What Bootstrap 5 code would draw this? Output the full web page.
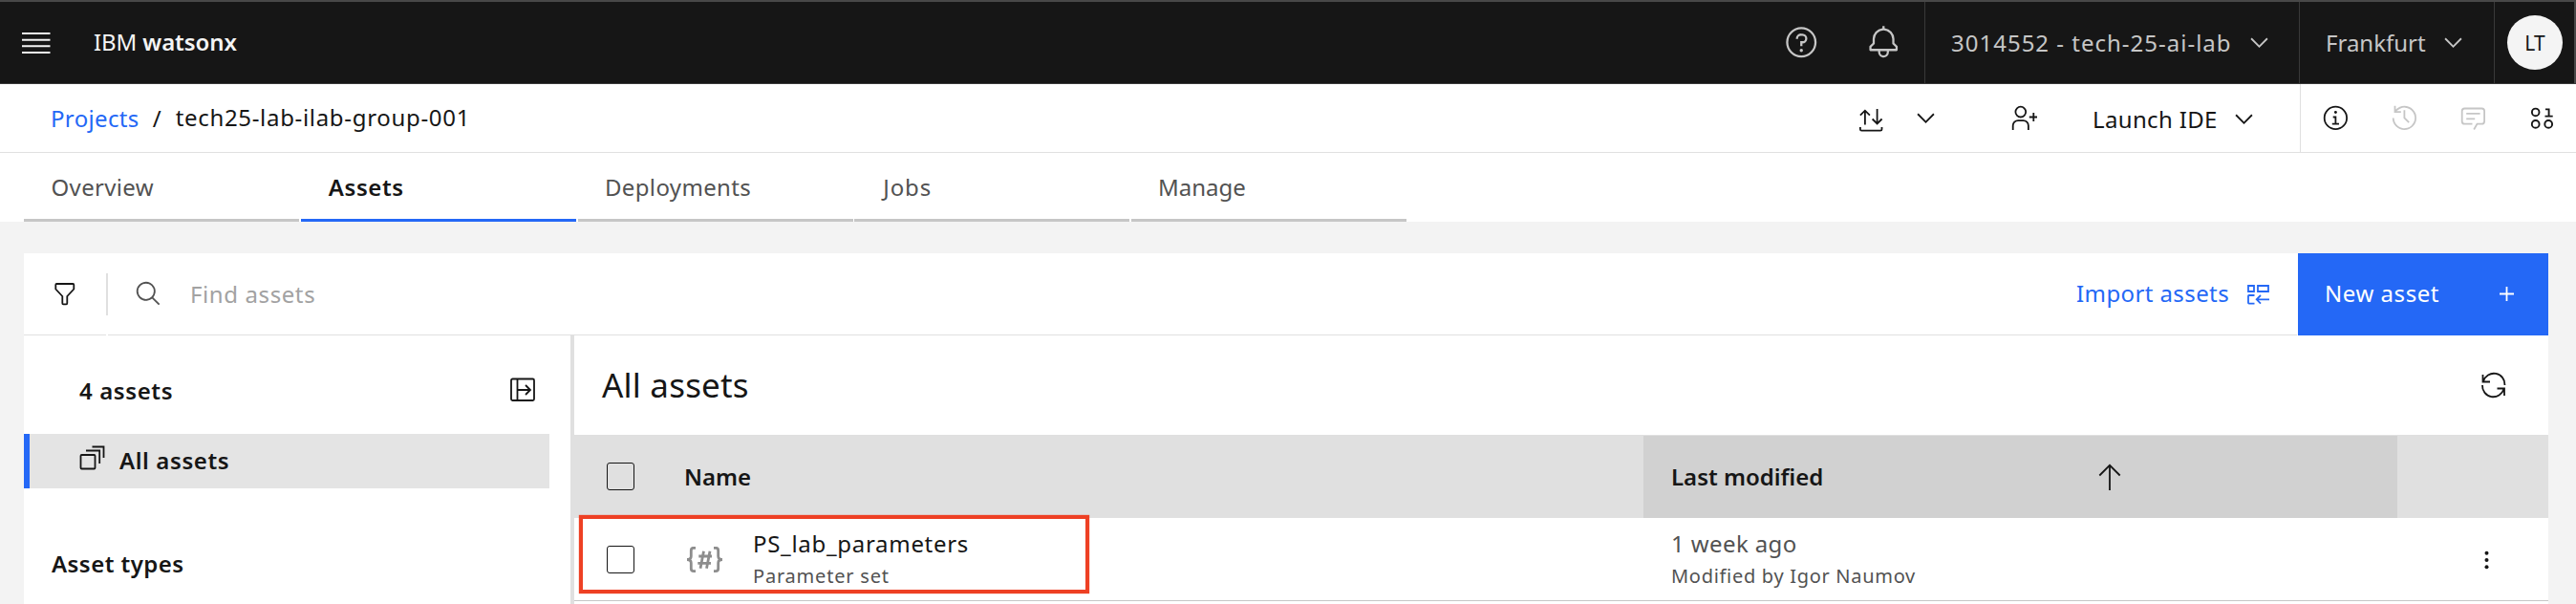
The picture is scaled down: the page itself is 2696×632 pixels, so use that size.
<!doctype html>
<html lang="en">
<head>
<meta charset="utf-8">
<meta name="viewport" content="width=device-width, initial-scale=1">
<title>IBM watsonx</title>
<link rel="stylesheet" href="https://cdn.jsdelivr.net/npm/bootstrap@5.3.0/dist/css/bootstrap.min.css">
<style>
:root{--ink:#161616;--muted:#525252;--blue:#2468f6;--line:#e0e0e0}
body{font-family:"Noto Sans",sans-serif;font-size:24px;line-height:34px;color:var(--ink);background:#f3f3f3;height:632px;overflow:hidden;white-space:nowrap}
svg{display:block;flex:none;fill:currentColor}
.ln{fill:none;stroke:currentColor;stroke-width:1.8}
a{text-decoration:none;color:inherit}
.semi{font-weight:600}
.soft{color:var(--muted)}
.sub{font-size:20px;line-height:34px;letter-spacing:.8px}

.topbar{height:88px;background:var(--ink);border-top:2px solid #484848;border-bottom:1px solid #393939;color:#f4f4f4;padding:0}
.burger{margin-left:23px}
.brandname{margin-left:45px;padding-bottom:1px;letter-spacing:-.1px;color:#f4f4f4}
.tools{color:#c6c6c6}
.tool{width:86px}
.seg{border-left:1px solid #393939}
.seg-account{width:392px;padding-left:27px}
.seg-account span{letter-spacing:1px}
.seg-account svg{margin-left:14px}
.seg-region{width:204px;padding-left:27px}
.seg-region svg{margin-left:14px}
.seg-user{width:86px;border-right:2px solid #484848}
.avatar{width:58px;height:57px;background:#f4f4f4;color:var(--ink);font-size:21px;letter-spacing:-1px}

.crumbs{height:72px;background:#fff;border-bottom:1px solid var(--line)}
.breadcrumb{padding-left:53px;padding-top:1px}
.breadcrumb a{color:var(--blue);letter-spacing:.35px}
.crumb-sep{margin:0 15px 0 14px}
.crumb-now{letter-spacing:.68px;padding-bottom:2px}
.act{width:57px}
.act-user{width:72px;margin-left:38px}
.launch{width:253px;padding-left:36px;padding-top:2px;letter-spacing:.35px}
.launch svg{margin-left:13px;margin-top:-1px}
.side-act{width:72px}
.off{color:#c6c6c6}

.tabs{height:72px;background:#fff;padding-left:25px;gap:1.75px}
.tabs .nav-link{width:288px;border-bottom:3px solid #c6c6c6;border-radius:0;color:var(--muted);padding:2px 0 0 28.5px;letter-spacing:.35px}
.tabs .nav-link.active{border-color:var(--blue);color:var(--ink);font-weight:600;padding-left:29px;letter-spacing:.6px}
.tabs .nav-link.jobs{padding-left:30px;letter-spacing:.9px}
.tabs .nav-link.manage{padding-left:28px;letter-spacing:0}

.panel{margin:33px 29px 0 25px;background:#fff;height:367px;overflow:hidden}
.searchbar{height:86px;flex:none}
.cell{border-bottom:1px solid var(--line)}
.filter{width:86px}
.rule{width:2px;height:44px;background:var(--line);margin-top:21px}
.find{padding-left:28px;color:#a2a2a2}
.find span{margin-left:29px;letter-spacing:.6px}
.find svg{color:var(--muted)}
.import{width:261px;color:var(--blue);padding-left:30px;margin-right:1px;letter-spacing:.4px;padding-bottom:2px}
.import svg{margin-left:17px;margin-top:2px}
.newbtn{width:262px;border-radius:0;background:var(--blue);color:#fff;font-size:24px;padding:0 35px 2px 28px;border:0;letter-spacing:.55px}
.newbtn:hover{background:#0f55e8;color:#fff}

.side{width:572px}
.side-head{height:103px;padding:12px 24px 0 58px;letter-spacing:.6px}
.side-item{width:550px;height:57px;background:#e4e4e4;border-left:6px solid var(--blue);padding-left:52px;letter-spacing:.6px}
.side-item svg{margin-top:-7px}
.side-item span{margin-left:15px;margin-top:-1px}
.side-sub{padding:62px 0 0 29px;letter-spacing:.45px}
.main{border-left:4px solid var(--line)}
.main-head{height:104px;padding:0 42px 0 29px}
.main-head h1{font-size:35px;font-weight:400;margin:0;letter-spacing:.2px}
.thead-row{height:87px;background:var(--line);font-weight:600}
.c-name{width:1119px;padding-left:34px}
.c-name .col-title{margin-left:52px}
.c-mod{width:789px;padding-left:29px}
.c-end{width:158px;padding-left:91px}
.asset-icon{margin-left:54px;color:#8d8d8d}
.asset-text{margin-left:31px}
.sorted{background:#d1d1d1;border-top:1px solid var(--line)}
.sorted svg{margin-left:288px}
.box{width:29px;height:29px;border:1px solid var(--ink);border-radius:3px}
.trow{height:87px;border-bottom:1px solid #c6c6c6;position:relative;padding-top:1px}
.frame{position:absolute;left:5px;top:-3px;width:534px;height:82px;border:4px solid #ee4024;box-shadow:0 0 1px #ee4024}
</style>
<script src="https://cdn.jsdelivr.net/npm/bootstrap@5.3.0/dist/js/bootstrap.bundle.min.js"></script>
</head>
<body>
<svg width="0" height="0" class="position-absolute">
  <symbol id="chev" viewBox="0 0 16 16"><path d="M8 11 3 6l.7-.7L8 9.6l4.3-4.3.7.7z"/></symbol>
</svg>

<header class="topbar d-flex align-items-center">
  <svg class="burger" width="30" height="24"><path d="M0 1h29.500v2H0zM0 7.700h29.500v2H0zM0 14.200h29.500v2H0zM0 20.900h29.500v2H0z"/></svg>
  <a class="brandname" href="#">IBM <span class="semi">watsonx</span></a>
  <div class="tools d-flex align-self-stretch ms-auto">
    <div class="tool d-flex align-items-center justify-content-center">
      <svg width="36.500" height="36.500" viewBox="0 0 32 32"><path d="M16 2a14 14 0 1 0 14 14A14 14 0 0 0 16 2Zm0 26a12 12 0 1 1 12-12 12 12 0 0 1-12 12Z"/><circle cx="16" cy="23.500" r="1.500"/><path d="M17 8h-1.500A4.490 4.490 0 0 0 11 12.500v.5h2v-.5a2.500 2.500 0 0 1 2.500-2.500H17a2.500 2.500 0 0 1 0 5h-2v4.500h2V17a4.500 4.500 0 0 0 0-9Z"/></svg>
    </div>
    <div class="tool d-flex align-items-center justify-content-center">
      <svg width="36.500" height="36.500" viewBox="0 0 32 32"><path d="M28.707 19.293 26 16.586V13a10.014 10.014 0 0 0-9-9.950V1h-2v2.050A10.014 10.014 0 0 0 6 13v3.586l-2.707 2.707A1 1 0 0 0 3 20v3a1 1 0 0 0 1 1h7v.777a5.152 5.152 0 0 0 4.500 5.199A5.006 5.006 0 0 0 21 25v-1h7a1 1 0 0 0 1-1v-3a1 1 0 0 0-.293-.707ZM19 25a3 3 0 0 1-6 0v-1h6Zm8-3H5v-1.586l2.707-2.707A1 1 0 0 0 8 17v-4a8 8 0 0 1 16 0v4a1 1 0 0 0 .293.707L27 20.414Z"/></svg>
    </div>
    <div class="seg seg-account d-flex align-items-center"><span>3014552 - tech-25-ai-lab</span><svg width="29" height="29"><use href="#chev"/></svg></div>
    <div class="seg seg-region d-flex align-items-center"><span>Frankfurt</span><svg width="29" height="29"><use href="#chev"/></svg></div>
    <div class="seg seg-user d-flex align-items-center justify-content-center"><div class="avatar rounded-circle d-flex align-items-center justify-content-center">LT</div></div>
  </div>
</header>

<div class="crumbs d-flex">
  <nav class="breadcrumb d-flex align-items-center mb-0">
    <a href="#">Projects</a><span class="crumb-sep">/</span><span class="crumb-now">tech25-lab-ilab-group-001</span>
  </nav>
  <div class="d-flex align-items-center ms-auto">
    <div class="act d-flex justify-content-center"><svg width="29" height="29"><path class="ln" d="M7.900 21.500V7M2.900 11.700l5-5 5 5M20.600 5v15.300M15.600 15.500l5 5 5-5M2.900 24v2.200q0 1.500 1.500 1.500H24q1.500 0 1.500-1.500V24"/></svg></div>
    <div class="act d-flex justify-content-center"><svg width="29" height="29"><use href="#chev"/></svg></div>
    <div class="act-user d-flex justify-content-center"><svg width="28.800" height="28.800" viewBox="0 0 32 32"><path d="M32 14h-4v-4h-2v4h-4v2h4v4h2v-4h4zM12 4a5 5 0 1 1-5 5 5 5 0 0 1 5-5m0-2a7 7 0 1 0 7 7 7 7 0 0 0-7-7ZM22 30h-2v-5a5 5 0 0 0-5-5H9a5 5 0 0 0-5 5v5H2v-5a7 7 0 0 1 7-7h6a7 7 0 0 1 7 7Z"/></svg></div>
    <div class="launch d-flex align-items-center"><span>Launch IDE</span><svg width="29" height="29"><use href="#chev"/></svg></div>
  </div>
  <div class="d-flex align-items-center border-start" style="--bs-border-color:#e0e0e0">
    <div class="side-act d-flex justify-content-center"><svg width="28.800" height="28.800" viewBox="0 0 32 32"><path d="M16 2a14 14 0 1 0 14 14A14 14 0 0 0 16 2Zm0 26a12 12 0 1 1 12-12 12 12 0 0 1-12 12Z"/><path d="M17 22v-8h-4v2h2v6h-3v2h8v-2z"/><circle cx="16" cy="9.500" r="1.600"/></svg></div>
    <div class="side-act off d-flex justify-content-center"><svg width="28.800" height="28.800" viewBox="0 0 32 32"><path d="M20.590 22 15 16.410V7h2v8.580l5 5.010zM16 2A13.940 13.940 0 0 0 6 6.230V2H4v8h8V8H7.080A12 12 0 1 1 4 16H2A14 14 0 1 0 16 2Z"/></svg></div>
    <div class="side-act off d-flex justify-content-center"><svg width="28.800" height="28.800" viewBox="0 0 32 32"><path d="M17.740 30 16 29l4-7h6a2 2 0 0 0 2-2V8a2 2 0 0 0-2-2H6a2 2 0 0 0-2 2v12a2 2 0 0 0 2 2h9v2H6a4 4 0 0 1-4-4V8a4 4 0 0 1 4-4h20a4 4 0 0 1 4 4v12a4 4 0 0 1-4 4h-4.840ZM8 10h16v2H8zM8 16h10v2H8z"/></svg></div>
    <div class="side-act d-flex justify-content-center"><svg width="29" height="29"><g fill="none" stroke="currentColor" stroke-width="1.900"><circle cx="7.700" cy="8.400" r="3.800"/><circle cx="7.700" cy="20.900" r="3.900"/><circle cx="21.200" cy="20.900" r="3.900"/><path d="M18 5.400h3.600v7.200M17.500 12.600h8.200"/></g></svg></div>
  </div>
</div>

<nav class="tabs nav flex-nowrap">
  <a class="nav-link d-flex align-items-center" href="#">Overview</a>
  <a class="nav-link d-flex align-items-center active" href="#">Assets</a>
  <a class="nav-link d-flex align-items-center" href="#">Deployments</a>
  <a class="nav-link d-flex align-items-center jobs" href="#">Jobs</a>
  <a class="nav-link d-flex align-items-center manage" href="#">Manage</a>
</nav>

<main class="panel d-flex flex-column">
  <div class="searchbar d-flex">
    <div class="cell filter d-flex align-items-center justify-content-center"><svg width="26" height="26"><path class="ln" d="M4.300 2h17q1 0 1 1v4.500l-7 7.500v7.300q0 1-1 1h-3q-1 0-1-1V15l-7-7.500V3q0-1 1-1z"/></svg></div>
    <div class="rule"></div>
    <div class="cell find flex-grow-1 d-flex align-items-center"><svg width="29" height="29" viewBox="0 0 32 32"><path d="m29 27.586-7.552-7.552a11.018 11.018 0 1 0-1.414 1.414L27.586 29ZM4 13a9 9 0 1 1 9 9 9.010 9.010 0 0 1-9-9Z"/></svg><span>Find assets</span></div>
    <a class="cell import d-flex align-items-center" href="#">Import assets<svg width="27" height="24"><path class="ln" d="M3 3h6v6H3zM13 3h11v6H13zM9.500 13H3.800q-.8 0-.8.800v7q0 .8.800.8H9.500M25 17.300H12M16 13l-4.300 4.300L16 21.600"/></svg></a>
    <button class="btn newbtn d-flex align-items-center justify-content-between">New asset<svg width="17" height="17"><path class="ln" d="M8.500 1v15M1 8.500h15"/></svg></button>
  </div>
  <div class="d-flex flex-grow-1">
    <aside class="side">
      <div class="side-head semi d-flex align-items-center justify-content-between">4 assets<svg width="52" height="29"><g class="ln"><rect x="14" y="2.500" width="24" height="22.500" rx="1.500"/><path d="M20.500 2.500V25M21 14h12.500M29 9l5 5-5 5"/></g></svg></div>
      <a class="side-item semi d-flex align-items-center" href="#"><svg width="27" height="26"><path class="ln" d="M2.500 10h13q1 0 1 1v12.500q0 1-1 1h-13q-1 0-1-1V11q0-1 1-1zM7 5.500h14.200V19M13.500 1.500h12V13"/></svg><span>All assets</span></a>
      <div class="side-sub semi">Asset types</div>
    </aside>
    <section class="main flex-grow-1">
      <div class="main-head d-flex align-items-center justify-content-between">
        <h1>All assets</h1>
        <svg width="30" height="30" viewBox="0 0 30 30"><path class="ln" d="M3.500 4v7.500H11M4 11A11.500 11.500 0 0 1 26.500 15M3 15A11.500 11.500 0 0 0 25.500 19M26 26v-7.500H18.500"/></svg>
      </div>
      <div class="thead-row d-flex">
        <div class="c-name d-flex align-items-center"><span class="box"></span><span class="col-title">Name</span></div>
        <div class="c-mod sorted d-flex align-items-center"><span>Last modified</span><svg width="24" height="29"><path class="ln" d="M12 28V2M1.300 12.500 12 1.800l10.700 10.700"/></svg></div>
        <div class="c-end"></div>
      </div>
      <div class="trow d-flex">
        <div class="c-name d-flex align-items-center">
          <span class="box"></span>
          <svg class="asset-icon" width="39" height="28"><g fill="none" stroke="currentColor" stroke-width="2.800"><path d="M10 1.300H8Q5.300 1.300 5.300 4v6q0 3.500-4.300 3.500 4.300 0 4.300 3.500v6q0 2.700 2.700 2.700h2M29 1.300h2q2.700 0 2.700 2.700v6q0 3.500 4.300 3.500-4.300 0-4.300 3.500v6q0 2.700-2.700 2.700h-2"/><path d="M18.500 4.700l-3.500 18M25 4.700l-3.500 18M13.300 10H27M12.300 17.300H26"/></g></svg>
          <div class="asset-text d-flex flex-column"><span style="letter-spacing:.7px">PS_lab_parameters</span><span class="sub soft">Parameter set</span></div>
        </div>
        <div class="c-mod soft d-flex flex-column justify-content-center"><span style="letter-spacing:.4px">1 week ago</span><span class="sub" style="letter-spacing:.7px">Modified by Igor Naumov</span></div>
        <div class="c-end d-flex align-items-center"><svg width="5" height="20"><circle cx="2.500" cy="2.700" r="2"/><circle cx="2.500" cy="10" r="2"/><circle cx="2.500" cy="17.200" r="2"/></svg></div>
        <div class="frame"></div>
      </div>
    </section>
  </div>
</main>
</body>
</html>
